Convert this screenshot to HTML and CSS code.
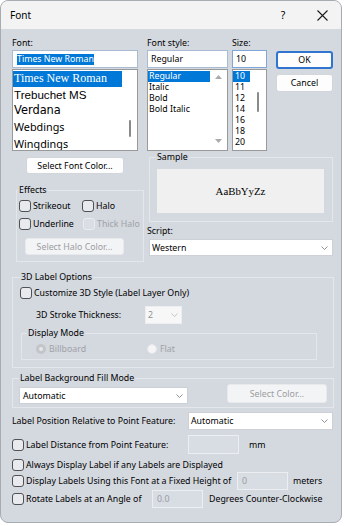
FILE: index.html
```html
<!DOCTYPE html>
<html lang="en">
<head>
<meta charset="utf-8">
<title>Font</title>
<link rel="stylesheet" href="styles.css">
</head>
<body>
<div class="window">
  <div class="titlebar">
    <span class="title">Font</span>
    <span class="tb-help">?</span>
    <span class="tb-close"><svg width="11" height="11" viewBox="0 0 11 11"><path d="M0.5 0.5L10.5 10.5M10.5 0.5L0.5 10.5" stroke="#1b1b1b" stroke-width="1.1" fill="none"/></svg></span>
  </div>
  <div class="content">
    <div class="top-row">
      <div class="col col-font">
        <div class="lbl">Font:</div>
        <div class="input input-font"><span class="sel-text">Times New Roman</span></div>
        <div class="list">
          <div class="items items-font">
            <div class="item item-font hl ff-times">Times New Roman</div>
            <div class="item item-font ff-treb">Trebuchet MS</div>
            <div class="item item-font ff-verd">Verdana</div>
            <div class="item item-font ff-ui">Webdings</div>
            <div class="item item-font ff-ui">Wingdings</div>
          </div>
          <div class="vscroll vs-font"><div class="thumb thumb-font"></div></div>
        </div>
      </div>
      <div class="col col-style">
        <div class="lbl">Font style:</div>
        <div class="input">Regular</div>
        <div class="list">
          <div class="items">
            <div class="item hl">Regular</div>
            <div class="item">Italic</div>
            <div class="item">Bold</div>
            <div class="item">Bold Italic</div>
          </div>
          <div class="vscroll vs-style">
            <svg width="7" height="4" viewBox="0 0 7 4"><path d="M3.5 0L7 4H0Z" fill="#a9abae"/></svg>
            <svg width="7" height="4" viewBox="0 0 7 4"><path d="M0 0H7L3.5 4Z" fill="#a9abae"/></svg>
          </div>
        </div>
      </div>
      <div class="col col-size">
        <div class="lbl">Size:</div>
        <div class="input input-size">10</div>
        <div class="list">
          <div class="items items-size">
            <div class="item hl">10</div>
            <div class="item">11</div>
            <div class="item">12</div>
            <div class="item">14</div>
            <div class="item">16</div>
            <div class="item">18</div>
            <div class="item">20</div>
          </div>
          <div class="vscroll vs-size"><div class="thumb thumb-size"></div></div>
        </div>
      </div>
      <div class="col col-btn">
        <div class="btn btn-ok">OK</div>
        <div class="btn btn-cancel">Cancel</div>
      </div>
    </div>

    <div class="mid-row">
      <div class="mid-left">
        <div class="btn btn-fontcolor">Select Font Color...</div>
        <fieldset class="fs fs-effects">
          <legend class="lg lg-effects">Effects</legend>
          <div class="cb-row">
            <div class="cb-item cb-item-w"><span class="cb"></span><span class="cb-text">Strikeout</span></div>
            <div class="cb-item"><span class="cb"></span><span class="cb-text">Halo</span></div>
          </div>
          <div class="cb-row cb-row-2">
            <div class="cb-item cb-item-w"><span class="cb"></span><span class="cb-text">Underline</span></div>
            <div class="cb-item cb-item-thick"><span class="cb cb-dis"></span><span class="cb-text dis">Thick Halo</span></div>
          </div>
          <div class="btn btn-disabled btn-halo">Select Halo Color...</div>
        </fieldset>
      </div>
      <div class="mid-right">
        <fieldset class="fs fs-sample">
          <legend class="lg lg-sample">Sample</legend>
          <div class="sample-box">AaBbYyZz</div>
        </fieldset>
        <div class="lbl lbl-script">Script:</div>
        <div class="select select-script"><span>Western</span><svg class="chev" width="7" height="4" viewBox="0 0 7 4"><path d="M0.5 0.5L3.5 3.5L6.5 0.5" stroke="#8f9297" fill="none"/></svg></div>
      </div>
    </div>

    <fieldset class="fs fs-3d">
      <legend class="lg">3D Label Options</legend>
      <div class="cb-row cb-row-custom"><span class="cb"></span><span class="cb-text">Customize 3D Style (Label Layer Only)</span></div>
      <div class="stroke-row">
        <span class="stroke-lbl">3D Stroke Thickness:</span>
        <div class="select select-dis select-stroke"><span>2</span><svg class="chev" width="7" height="4" viewBox="0 0 7 4"><path d="M0.5 0.5L3.5 3.5L6.5 0.5" stroke="#c3c5c9" fill="none"/></svg></div>
      </div>
      <fieldset class="fs fs-mode">
        <legend class="lg">Display Mode</legend>
        <div class="radio-row">
          <div class="radio-item radio-item-w"><span class="radio radio-on"></span><span class="dis">Billboard</span></div>
          <div class="radio-item"><span class="radio radio-off"></span><span class="dis">Flat</span></div>
        </div>
      </fieldset>
    </fieldset>

    <fieldset class="fs fs-bg">
      <legend class="lg lg-bg">Label Background Fill Mode</legend>
      <div class="bg-row">
        <div class="select select-bg"><span>Automatic</span><svg class="chev" width="7" height="4" viewBox="0 0 7 4"><path d="M0.5 0.5L3.5 3.5L6.5 0.5" stroke="#8f9297" fill="none"/></svg></div>
        <div class="btn btn-disabled btn-color">Select Color...</div>
      </div>
    </fieldset>

    <div class="pos-row">
      <span class="pos-lbl">Label Position Relative to Point Feature:</span>
      <div class="select select-pos"><span>Automatic</span><svg class="chev" width="7" height="4" viewBox="0 0 7 4"><path d="M0.5 0.5L3.5 3.5L6.5 0.5" stroke="#8f9297" fill="none"/></svg></div>
    </div>

    <div class="opt-row opt-row-1">
      <span class="cb"></span><span class="opt-text w1">Label Distance from Point Feature:</span>
      <div class="dis-input"></div><span class="unit unit-mm">mm</span>
    </div>
    <div class="opt-row opt-row-2">
      <span class="cb"></span><span class="opt-text">Always Display Label if any Labels are Displayed</span>
    </div>
    <div class="opt-row opt-row-3">
      <span class="cb"></span><span class="opt-text w3">Display Labels Using this Font at a Fixed Height of</span>
      <div class="dis-input">0</div><span class="unit unit-m">meters</span>
    </div>
    <div class="opt-row opt-row-4">
      <span class="cb"></span><span class="opt-text w4">Rotate Labels at an Angle of</span>
      <div class="dis-input">0.0</div><span class="unit unit-deg">Degrees Counter-Clockwise</span>
    </div>
  </div>
</div>
</body>
</html>
```
FILE: styles.css
```css
* { box-sizing: border-box; }
html, body { margin: 0; padding: 0; background: #ffffff; }
body {
  font-family: "Noto Sans", "Open Sans", sans-serif;
  font-size: 8.8px;
  line-height: 12px;
  color: #000;
}
.window {
  width: 342px;
  height: 523px;
  border: 1px solid #a7abb2;
  border-radius: 8px;
  overflow: hidden;
  background: #d4d8df;
}
.titlebar {
  height: 28px;
  background: #f3f3f3;
  display: flex;
  align-items: center;
  padding-left: 9px;
}
.title { font-size: 10px; }
.tb-help { margin-left: auto; width: 20px; text-align: center; font-size: 10.5px; }
.tb-close { width: 20px; margin-left: 19px; margin-right: 9px; display: flex; justify-content: center; align-items: center; }

.content { padding: 8px 0 0 11px; }

/* top row */
.top-row { display: flex; height: 114px; }
.col { display: flex; flex-direction: column; }
.col-font { width: 126px; }
.col-style { width: 81px; margin-left: 9px; }
.col-size { width: 35px; margin-left: 4px; }
.col-btn { width: 57px; margin-left: 9px; }
.lbl { height: 13px; line-height: 12px; white-space: nowrap; }
.input {
  height: 18px;
  border: 1px solid #a9bbd3;
  background: #fff;
  display: flex;
  align-items: center;
  padding-left: 3px;
  white-space: nowrap;
}
.input-font { padding-left: 4px; }
.input-size { border-color: #7ea6d8; }
.sel-text { background: #0078d7; color: #fff; line-height: 11px; }
.list {
  height: 82px;
  margin-top: 1px;
  border: 1px solid #9a9a9a;
  background: #fff;
  display: flex;
  overflow: hidden;
}
.items { flex: 1; overflow: hidden; padding-top: 1px; }
.item { height: 11px; line-height: 11px; padding-left: 1px; white-space: nowrap; }
.items-size .item { padding-left: 2px; }
.items-font { padding-top: 0.5px; }
.item-font { height: 16.25px; line-height: 15.4px; }
.hl { background: #0078d7; color: #fff; }
.ff-times { font-family: "Liberation Serif", serif; font-size: 12px; }
.ff-treb { font-family: "Liberation Sans", sans-serif; font-size: 11.6px; }
.ff-verd { font-family: "DejaVu Sans", sans-serif; font-size: 11.4px; }
.ff-ui { font-size: 10.8px; }
.vscroll { flex: none; }
.vs-font { width: 15px; }
.vs-style { width: 17px; display: flex; flex-direction: column; align-items: center; justify-content: space-between; padding: 5px 0 7px; }
.vs-size { width: 16px; }
.thumb { width: 2px; margin-left: 7px; background: #8a8a8a; border-radius: 1px; }
.thumb-font { margin-top: 50px; height: 17px; }
.thumb-size { margin-top: 22px; height: 20px; }

.btn {
  height: 18px;
  background: #fdfdfd;
  border: 1px solid #d2d5da;
  border-radius: 3px;
  display: flex;
  align-items: center;
  justify-content: center;
  white-space: nowrap;
}
.btn-ok { margin-top: 14px; border: 2px solid #2f74cf; }
.btn-cancel { margin-top: 5px; }
.btn-disabled { background: #f3f4f6; border-color: #e7e9ec; color: #9b9da1; }

/* middle */
.mid-row { display: flex; }
.mid-left { width: 135px; }
.mid-right { width: 186px; }
.btn-fontcolor { margin: 6px 0 0 14px; width: 98px; height: 17px; }

.fs {
  margin: 0;
  padding: 0;
  min-width: 0;
  border: 1px solid #e3e6eb;
}
.lg { padding: 0 1px; line-height: 12px; height: 12px; white-space: nowrap; }
.fs-effects { margin: 10px 0 0 4px; width: 128px; padding: 3px 0 6px 2px; }
.lg-effects { margin-left: -1px; }
.cb-row { display: flex; align-items: center; height: 14px; }
.cb-row-2 { margin-top: 4px; }
.cb-item { display: flex; align-items: center; }
.cb-item-w { width: 63px; }
.cb-item-thick { margin-left: 1px; }
.cb {
  flex: none;
  width: 12px;
  height: 12px;
  border: 1px solid #4f5154;
  border-radius: 3px;
  background: #e8eaee;
}
.cb-dis { border-color: #e9ebee; background: #dadde3; }
.cb-text { margin-left: 2px; white-space: nowrap; }
.dis { color: #9fa2a7; }
.btn-halo { margin: 7px 0 0 6px; width: 99px; height: 17px; }

.fs-sample { margin-left: 2px; width: 184px; padding: 6px 8px 8px 7px; }
.lg-sample { margin-left: -1px; }
.sample-box {
  height: 44px;
  background: #f0f0f0;
  display: flex;
  align-items: center;
  justify-content: center;
  font-family: "Liberation Serif", serif;
  font-size: 10.8px;
}
.lbl-script { margin-top: 3px; height: 12px; }
.select {
  height: 17px;
  background: #fff;
  border: 1px solid #cdd0d6;
  display: flex;
  align-items: center;
  justify-content: space-between;
  padding: 0 4px 0 2px;
  white-space: nowrap;
}
.select-script { margin: 2px 0 0 2px; width: 184px; }
.chev { flex: none; }

/* 3D */
.fs-3d { margin-top: 9px; width: 322px; padding: 2px 0 7px 7px; }
.cb-row-custom { height: 15px; }
.stroke-row { display: flex; align-items: center; height: 18px; margin-top: 6px; }
.stroke-lbl { width: 125px; padding-left: 16px; white-space: nowrap; }
.select-dis { background: #f7f7f8; border-color: #eceef1; color: #8e9095; }
.select-stroke { width: 37px; height: 18px; padding: 0 3px 0 2px; }
.fs-mode { margin: 3px 0 0 1px; width: 296px; padding: 3px 0 3px 5px; }
.radio-row { display: flex; align-items: center; height: 14px; margin-left: 9px; }
.radio-item { display: flex; align-items: center; }
.radio-item-w { width: 111px; }
.radio { flex: none; width: 10px; height: 10px; border-radius: 50%; margin-right: 3px; }
.radio-on { background: #c3c5c9; display: flex; align-items: center; justify-content: center; }
.radio-on::after { content: ""; width: 4px; height: 4px; border-radius: 50%; background: #e6e7e9; }
.radio-off { background: #f5f5f6; border: 1px solid #e4e6e9; }

/* background fill */
.fs-bg { margin-top: 4px; width: 322px; padding: 0 0 3px 6px; }
.lg-bg { margin-left: 0; }
.bg-row { display: flex; align-items: flex-start; height: 20px; }
.select-bg { margin-top: 3px; width: 169px; padding-left: 3px; }
.btn-color { margin-left: 39px; width: 100px; height: 19px; }

/* position */
.pos-row { display: flex; align-items: center; height: 18px; margin-top: 4px; }
.pos-lbl { width: 176px; white-space: nowrap; }
.select-pos { width: 145px; height: 18px; }

/* options */
.opt-row { display: flex; align-items: center; white-space: nowrap; }
.opt-row-1 { height: 19px; margin-top: 5px; }
.opt-row-2 { height: 14px; margin-top: 4px; }
.opt-row-3 { height: 18px; }
.opt-row-4 { height: 18px; }
.opt-text { margin-left: 2px; }
.w1 { width: 162px; }
.w3 { width: 211px; }
.w4 { width: 126px; }
.dis-input {
  width: 51px;
  height: 100%;
  border: 1px solid #eceef2;
  background: #d8dce3;
  color: #9a9da2;
  display: flex;
  align-items: center;
  padding-left: 4px;
}
.unit-mm { margin-left: 10px; }
.unit-m { margin-left: 5px; }
.unit-deg { margin-left: 6px; }
```
